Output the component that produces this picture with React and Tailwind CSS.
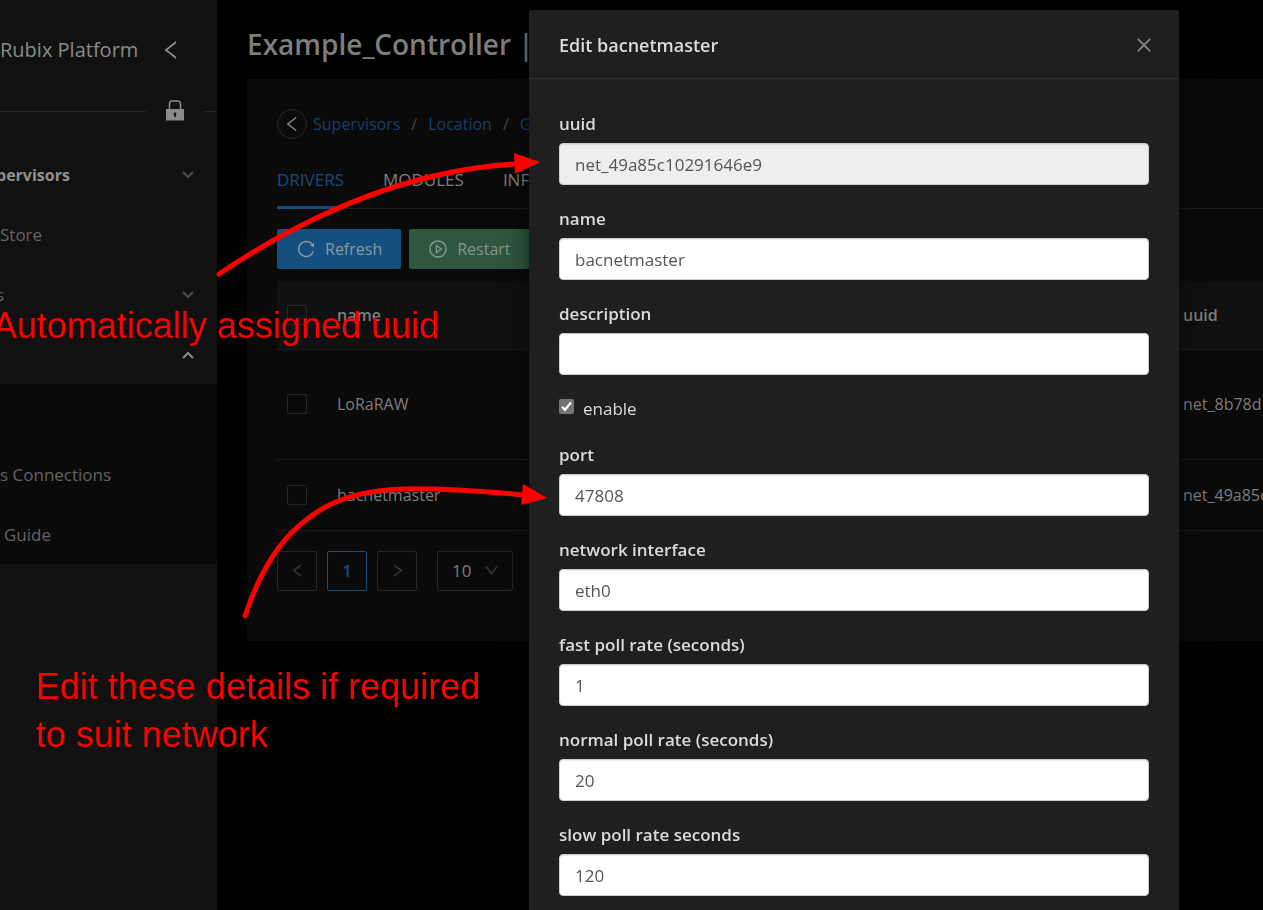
import React from "react";
import {
  AiOutlineClose,
  AiOutlineDown,
  AiOutlineLeft,
  AiOutlinePlayCircle,
  AiOutlineReload,
  AiOutlineRight,
} from "react-icons/ai";

function Chevron({ up, className }) {
  return (
    <svg viewBox="0 0 12 8" className={`h-2 w-3 shrink-0 ${className}`} fill="none" stroke="currentColor" strokeWidth="2">
      <path d={up ? "M1 7L6 2L11 7" : "M1 1L6 6L11 1"} />
    </svg>
  );
}

function LockIcon() {
  return (
    <svg viewBox="0 0 18 22" className="block h-[22px] w-[18px]">
      <path d="M3.500 10V3.500a2.500 2.500 0 0 1 2.500-2.500h6a2.500 2.500 0 0 1 2.500 2.500V10" fill="none" stroke="#8a8a8a" strokeWidth="1.500" />
      <rect x="0" y="9" width="18" height="11.500" fill="#8a8a8a" />
      <path d="M9 12.500a1.500 1.500 0 0 1 .8 2.700V17H8.200v-1.800A1.500 1.500 0 0 1 9 12.500Z" fill="#111" />
    </svg>
  );
}

function MenuRow({ children, chevron, className = "" }) {
  return (
    <a href="#" className={`flex h-[60px] items-center justify-between pt-px pr-[23px] text-[#636363] ${className}`}>
      <span className="whitespace-pre">{children}</span>
      {chevron === "down" && <Chevron className="text-[#4d4d4d]" />}
      {chevron === "up" && <Chevron up className="text-[#8a8a8a]" />}
    </a>
  );
}

function Sidebar() {
  return (
    <aside className="w-[217px] shrink-0 overflow-hidden bg-[#111111]">
      <div className="-ml-1">
        <div className="flex h-[100px] items-center justify-between pr-[34px] pl-1 text-[20px] text-[#8a8a8a]">
          <span>Rubix Platform</span>
          <button aria-label="Collapse menu">
            <AiOutlineLeft className="size-6" />
          </button>
        </div>
        <div className="flex h-[22px] items-center gap-[20px]">
          <span className="h-px w-[150px] bg-[#242424]" />
          <button aria-label="Lock menu">
            <LockIcon />
          </button>
          <span className="h-px flex-1 bg-[#242424]" />
        </div>
        <nav className="pt-[22px]">
          <MenuRow chevron="down" className="text-[16px] font-bold !text-[#8f8f8f]">pervisors</MenuRow>
          <MenuRow className="pl-1">Store</MenuRow>
          <MenuRow chevron="down">s</MenuRow>
          <MenuRow chevron="up"> </MenuRow>
          <div className="bg-[#0a0a0a]">
            <MenuRow> </MenuRow>
            <MenuRow className="pl-1">s Connections</MenuRow>
            <MenuRow className="pl-2">Guide</MenuRow>
          </div>
        </nav>
      </div>
    </aside>
  );
}

const networks = [
  { name: "LoRaRAW", uuid: "net_8b78d", height: "h-[110px]" },
  { name: "bacnetmaster", uuid: "net_49a85c10291646e9", height: "h-[71px]" },
];

function Tick({ label }) {
  return (
    <input
      type="checkbox"
      aria-label={label}
      className="block size-5 appearance-none rounded-[2px] border border-[#262626]"
    />
  );
}

function Main() {
  return (
    <main className="min-w-0 flex-1 overflow-hidden pl-[30px] text-[#7d7d7d]">
      <h1 className="pt-6 text-[28px] leading-[40px] font-semibold whitespace-nowrap">Example_Controller |</h1>
      <section className="mt-[15px] rounded-l-[2px] bg-[#0a0a0a] pt-[30px] pb-[50px] pl-[30px]">
        <div className="flex h-[30px] items-center gap-[6px] whitespace-nowrap">
          <button aria-label="Back" className="flex size-[30px] items-center justify-center rounded-full border border-[#2a2a2a]">
            <AiOutlineLeft className="size-5" />
          </button>
          <nav aria-label="Breadcrumb" className="flex gap-[11px] text-[16px] text-[#173f6a]">
            <a href="#">Supervisors</a>
            <span className="text-[#454545]">/</span>
            <a href="#">Location</a>
            <span className="text-[#454545]">/</span>
            <a href="#">G</a>
          </nav>
        </div>
        <div className="mt-[15px] flex h-[55px] gap-[39px] border-b border-[#1b1b1b]">
          <button className="-mb-px border-b-[3px] border-[#164a7a] text-[#164a7a]">DRIVERS</button>
          <button className="pb-[2px]">MODULES</button>
          <button className="pb-[2px]">INFO</button>
        </div>
        <div className="mt-5 flex gap-2 text-[16px] text-[#8798a5]">
          <button className="flex h-10 items-center gap-[9px] rounded-[2px] bg-[#14507f] px-[19px]">
            <AiOutlineReload className="size-5" />
            Refresh
          </button>
          <button className="flex h-10 items-center gap-[9px] rounded-[2px] bg-[#2f563f] px-[19px] text-[#82958a]">
            <AiOutlinePlayCircle className="size-5" />
            Restart
          </button>
        </div>
        <table className="mt-3 w-full table-fixed border-collapse text-left">
          <colgroup>
            <col className="w-[60px]" />
            <col />
            <col className="w-[80px]" />
          </colgroup>
          <thead>
            <tr className="h-[68px] border-b border-[#1b1b1b] bg-[#101010]">
              <th className="pl-[10px]">
                <Tick label="Select all" />
              </th>
              <th className="text-[16px] font-semibold">name</th>
              <th className="text-[16px] font-semibold">uuid</th>
            </tr>
          </thead>
          <tbody>
            {networks.map((n) => (
              <tr key={n.name} className={`border-b border-[#1b1b1b] ${n.height}`}>
                <td className="pl-[10px]">
                  <Tick label={`Select ${n.name}`} />
                </td>
                <td className="text-[16px]">{n.name}</td>
                <td className="text-[16px] whitespace-nowrap">{n.uuid}</td>
              </tr>
            ))}
          </tbody>
        </table>
        <div className="mt-5 flex gap-[10px]">
          <button aria-label="Previous page" className="flex size-10 items-center justify-center rounded-[2px] border border-[#262626] text-[#3a3a3a]">
            <AiOutlineLeft className="size-[17px]" />
          </button>
          <button className="size-10 rounded-[2px] border border-[#164a7a] font-semibold text-[#164a7a]">1</button>
          <button aria-label="Next page" className="flex size-10 items-center justify-center rounded-[2px] border border-[#262626] text-[#3a3a3a]">
            <AiOutlineRight className="size-[17px]" />
          </button>
          <div className="ml-[10px] grid h-10 w-[76px] items-center rounded-[2px] border border-[#262626]">
            <select aria-label="Page size" className="col-start-1 row-start-1 h-full appearance-none bg-transparent pl-[14px]">
              <option>10</option>
            </select>
            <AiOutlineDown className="pointer-events-none col-start-1 row-start-1 mr-3 size-[17px] justify-self-end text-[#3a3a3a]" />
          </div>
        </div>
      </section>
    </main>
  );
}

function Field({ id, label, value, disabled }) {
  return (
    <div>
      <label htmlFor={id} className="mb-[5px] block leading-[28px] font-semibold">
        {label}
      </label>
      <input
        id={id}
        defaultValue={value}
        disabled={disabled}
        className="block h-[42px] w-full rounded-[4px] border border-[#cccccc] bg-white px-[15px] text-[#555555] shadow-[inset_0_1px_1px_rgba(0,0,0,0.075)] disabled:bg-[#eeeeee]"
      />
    </div>
  );
}

function EditDialog() {
  return (
    <div className="fixed inset-0 flex justify-end overflow-hidden pt-[10px] pr-[84px]">
      <div
        role="dialog"
        aria-labelledby="dialog-title"
        className="w-[650px] rounded-t-[2px] bg-[#1f1f1f] text-[#dbdbdb] shadow-[0_3px_6px_-4px_rgba(0,0,0,0.48),0_6px_16px_rgba(0,0,0,0.32),0_9px_28px_8px_rgba(0,0,0,0.2)]"
      >
        <header className="flex h-[69px] items-center justify-between border-b border-[#303030] px-[30px] pt-[2px]">
          <h2 id="dialog-title" className="text-[18px] font-semibold">
            Edit bacnetmaster
          </h2>
          <button aria-label="Close" className="-mr-[5px] text-[#8a8a8a]">
            <AiOutlineClose className="block size-5" />
          </button>
        </header>
        <form className="flex flex-col gap-5 px-[30px] py-[31px]">
          <Field id="uuid" label="uuid" value="net_49a85c10291646e9" disabled />
          <Field id="name" label="name" value="bacnetmaster" />
          <Field id="description" label="description" value="" />
          <div className="flex h-[26px] gap-[9px]">
            <div className="grid self-start pt-1">
              <input
                id="enable"
                type="checkbox"
                defaultChecked
                className="peer col-start-1 row-start-1 size-[15px] appearance-none rounded-[2px] bg-white checked:bg-[#757575]"
              />
              <svg
                viewBox="0 0 15 15"
                className="pointer-events-none invisible col-start-1 row-start-1 size-[15px] peer-checked:visible"
                fill="none"
                stroke="#fff"
                strokeWidth="2.200"
              >
                <path d="M3 7.800L6 10.800L12 3.500" />
              </svg>
            </div>
            <label htmlFor="enable">enable</label>
          </div>
          <Field id="port" label="port" value="47808" />
          <Field id="interface" label="network interface" value="eth0" />
          <Field id="fast" label="fast poll rate (seconds)" value="1" />
          <Field id="normal" label="normal poll rate (seconds)" value="20" />
          <Field id="slow" label="slow poll rate seconds" value="120" />
        </form>
      </div>
    </div>
  );
}

function Annotations() {
  return (
    <div className="pointer-events-none fixed inset-0 overflow-hidden font-['Liberation_Sans',Arial,sans-serif] text-[36px] leading-[48px] text-[#ff0000]">
      <svg width="560" height="640" viewBox="0 0 560 640" className="absolute top-0 left-0" fill="none" stroke="#ff0000" strokeWidth="5" strokeLinecap="round">
        <path d="M219 274C310 213 410 170 516 164" />
        <path d="M514 153L540 162L515 174Z" fill="#ff0000" stroke="none" />
        <path d="M245 616C261 568 283 537 306 520C330 500 365 490 403 489C440 488 480 491 524 495" />
        <path d="M523 484L547 498L521 505Z" fill="#ff0000" stroke="none" />
      </svg>
      <p className="absolute top-[302px] -left-[7px] whitespace-nowrap">Automatically assigned uuid</p>
      <p className="absolute top-[663px] left-9 whitespace-nowrap">
        Edit these details if required
        <br />
        to suit network
      </p>
    </div>
  );
}

export default function App() {
  return (
    <div className="flex min-h-screen bg-black font-['Open_Sans','Noto_Sans',sans-serif] text-[17px] leading-[28px]">
      <Sidebar />
      <Main />
      <EditDialog />
      <Annotations />
    </div>
  );
}
